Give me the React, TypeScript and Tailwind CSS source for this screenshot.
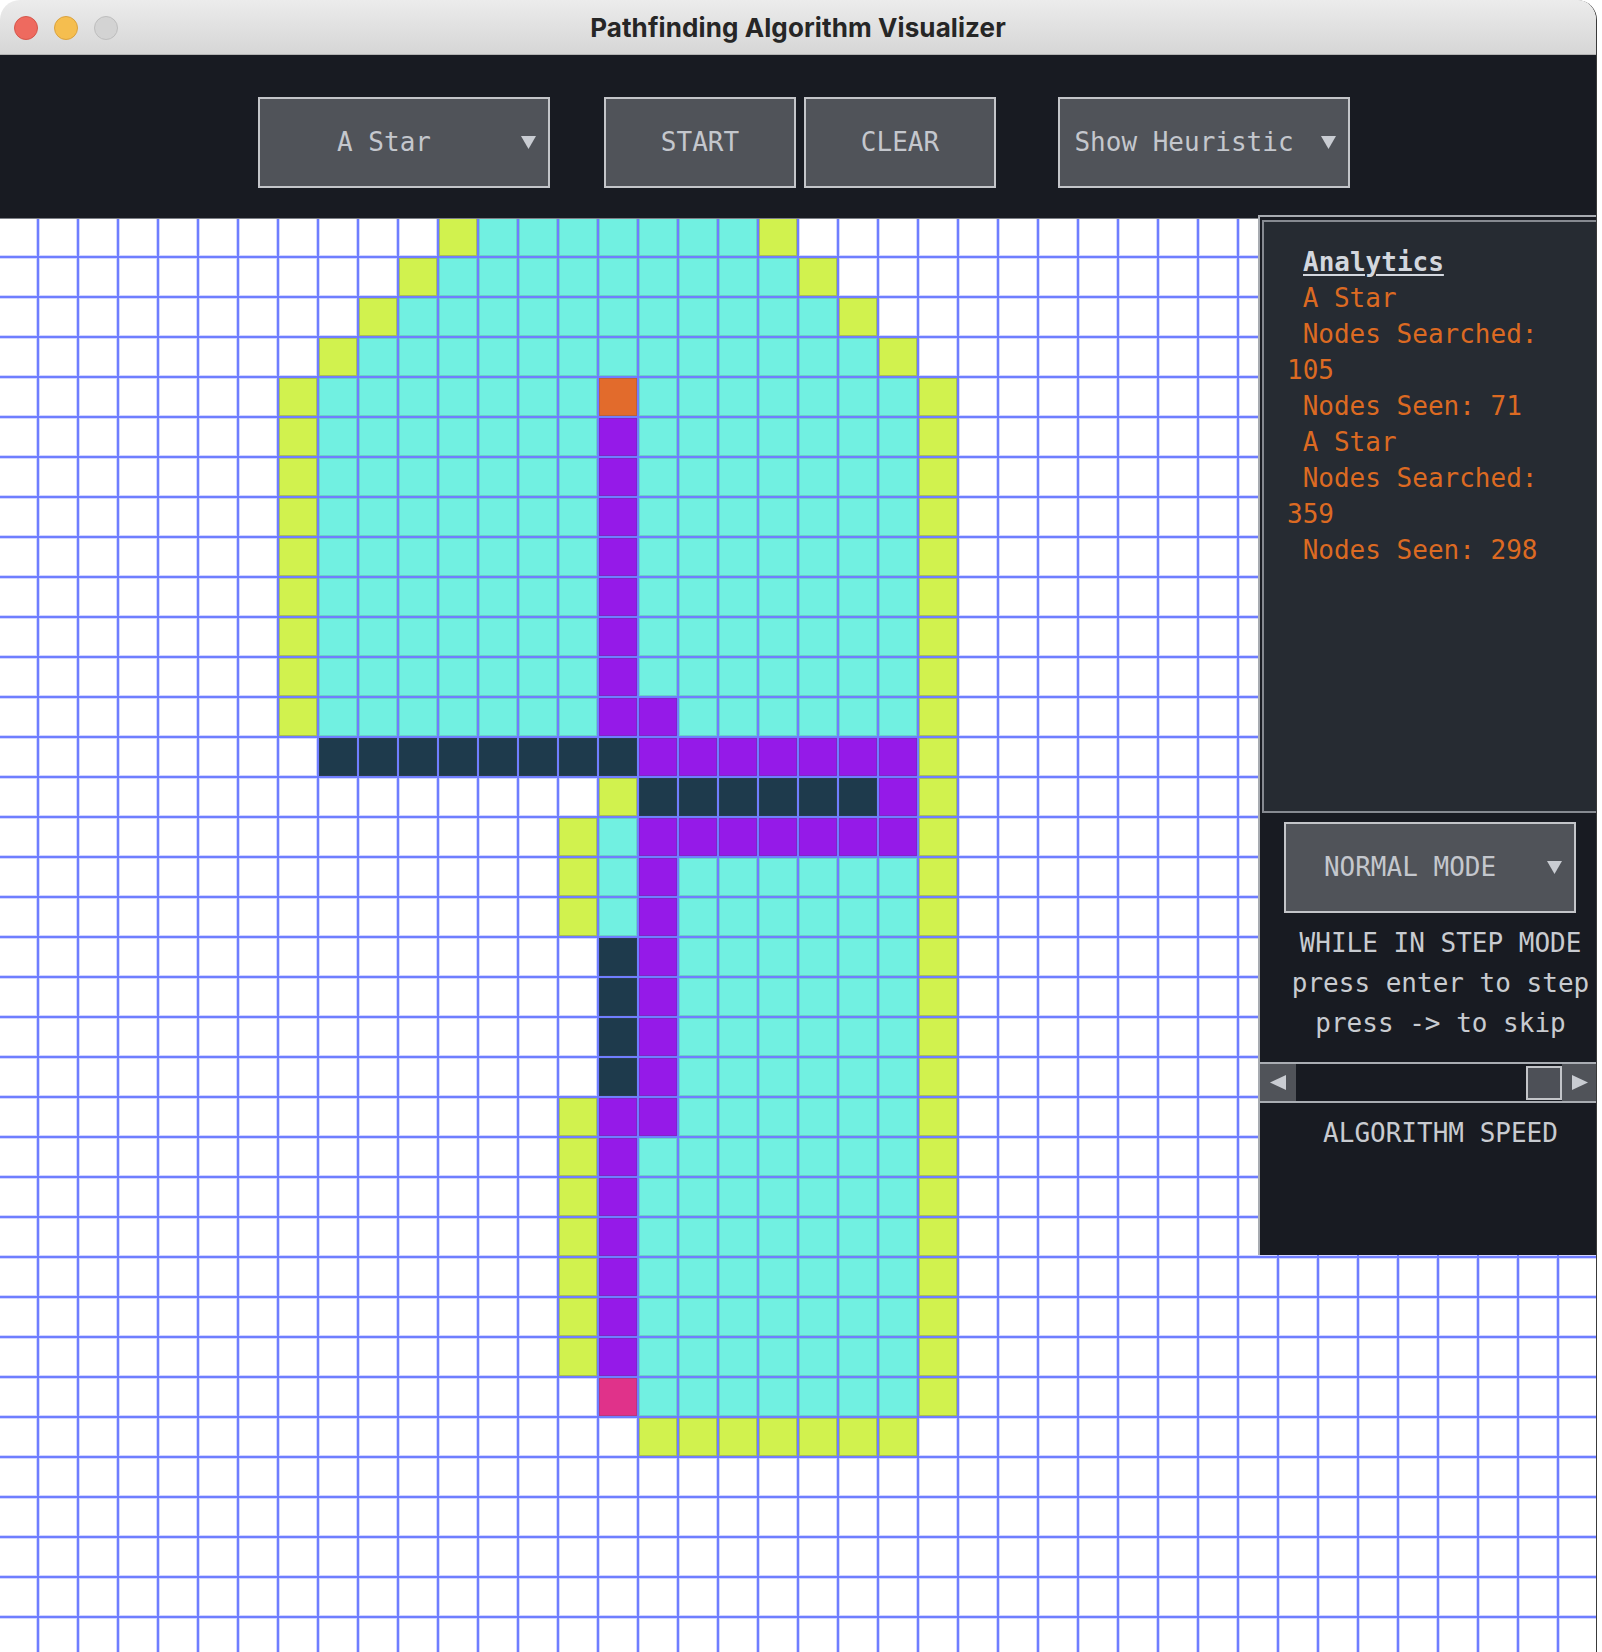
import React from 'react'

type Cell = 'Y' | 'C' | 'P' | 'D' | 'O' | 'K' | null

const cellClass: Record<string, string> = {
    Y: 'bg-[#d1f24e] shadow-[inset_0_0_0_1px_rgba(70,70,90,0.28)]',
    C: 'bg-[#71f0e1] shadow-[inset_0_0_0_1px_rgba(70,70,90,0.18)]',
    P: 'bg-[#951ae8] shadow-[inset_0_0_0_1px_rgba(70,70,90,0.25)]',
    D: 'bg-[#1e3a4c] shadow-[inset_0_0_0_1px_rgba(70,70,90,0.25)]',
    O: 'bg-[#e26b2c] shadow-[inset_0_0_0_1px_rgba(70,70,90,0.25)]',
    K: 'bg-[#e0328a] shadow-[inset_0_0_0_1px_rgba(70,70,90,0.25)]',
    E: 'bg-white shadow-[inset_1px_1px_0_#d2d6ff,inset_-1px_-1px_0_#d2d6ff]',
}

const ROWS = 36
const COLS = 41

// explored area of the search, row by row
const cellAt = (r: number, c: number): Cell => {
    if (r <= 3) {
        if (c === 11 - r || c === 19 + r) return 'Y'
        if (c > 11 - r && c < 19 + r) return 'C'
        return null
    }
    if (r <= 12) {
        if (c === 7 || c === 23) return 'Y'
        if (r === 4 && c === 15) return 'O'
        if (c === 15) return 'P'
        if (r === 12 && c === 16) return 'P'
        if (c > 7 && c < 23) return 'C'
        return null
    }
    if (r === 13) {
        if (c >= 8 && c <= 15) return 'D'
        if (c >= 16 && c <= 22) return 'P'
        if (c === 23) return 'Y'
        return null
    }
    if (r === 14) {
        if (c === 15 || c === 23) return 'Y'
        if (c >= 16 && c <= 21) return 'D'
        if (c === 22) return 'P'
        return null
    }
    if (r <= 17) {
        if (c === 14 || c === 23) return 'Y'
        if (c === 15) return 'C'
        if (r === 15 && c >= 16 && c <= 22) return 'P'
        if (c === 16) return 'P'
        if (c >= 17 && c <= 22) return 'C'
        return null
    }
    if (r <= 21) {
        if (c === 15) return 'D'
        if (c === 16) return 'P'
        if (c >= 17 && c <= 22) return 'C'
        if (c === 23) return 'Y'
        return null
    }
    if (r <= 28) {
        if (c === 14 || c === 23) return 'Y'
        if (c === 15) return 'P'
        if (r === 22 && c === 16) return 'P'
        if (c >= 16 && c <= 22) return 'C'
        return null
    }
    if (r === 29) {
        if (c === 15) return 'K'
        if (c >= 16 && c <= 22) return 'C'
        if (c === 23) return 'Y'
        return null
    }
    if (r === 30 && c >= 16 && c <= 22) return 'Y'
    return null
}

const DownArrow = () => (
    <svg width="15" height="15" viewBox="0 0 15 15">
        <polygon points="0,1 15,1 7.5,14" fill="#c9ccd2" />
    </svg>
)

const Dropdown = ({ label }: { label: string }) => (
    <div className="flex h-[91px] w-[292px] border-2 border-[#c3c5c9] bg-[#505359] text-[#c4c7cd]">
        <div className="flex flex-1 items-center justify-center">{label}</div>
        <div className="flex w-[40px] items-center justify-center">
            <DownArrow />
        </div>
    </div>
)

const Button = ({ label }: { label: string }) => (
    <div className="flex h-[91px] w-[192px] items-center justify-center border-2 border-[#c3c5c9] bg-[#505359] text-[#c4c7cd]">
        {label}
    </div>
)

const TitleBar = () => (
    <div className="relative flex h-[55px] items-center justify-center border-b border-[#b3b3b3] bg-gradient-to-b from-[#ececec] to-[#d6d6d6]">
        <div className="absolute left-[14px] top-[16px] flex gap-[16px]">
            <div className="h-[24px] w-[24px] rounded-full border border-[#d4574c] bg-[#ee6a5f]" />
            <div className="h-[24px] w-[24px] rounded-full border border-[#d9a23f] bg-[#f5be4f]" />
            <div className="h-[24px] w-[24px] rounded-full border border-[#bdbdbd] bg-[#d3d3d3]" />
        </div>
        <span className="font-['Inter'] text-[26px] font-bold tracking-[0.1px] text-[#262626]">
            Pathfinding Algorithm Visualizer
        </span>
    </div>
)

const Toolbar = () => (
    <div className="relative z-10 flex h-[164px] items-start border-b border-[#7d8087] bg-[#181b22] pl-[258px] pt-[42px]">
        <Dropdown label="A Star" />
        <div className="ml-[54px] flex gap-[8px]">
            <Button label="START" />
            <Button label="CLEAR" />
        </div>
        <div className="ml-[62px]">
            <Dropdown label="Show Heuristic" />
        </div>
    </div>
)

const Grid = () => {
    const cells = []
    for (let r = 0; r < ROWS; r++) {
        for (let c = 0; c < COLS; c++) {
            const k = cellAt(r, c) ?? 'E'
            cells.push(
                <div key={r + '-' + c} className={'border-b-2 border-r-2 border-[#6f7eff] ' + cellClass[k]} />
            )
        }
    }
    return (
        <div className="-ml-px -mt-px grid w-max grid-cols-[repeat(41,40px)] auto-rows-[40px]">
            {cells}
        </div>
    )
}

const analytics = [
    ' A Star',
    ' Nodes Searched:',
    '105',
    ' Nodes Seen: 71',
    ' A Star',
    ' Nodes Searched:',
    '359',
    ' Nodes Seen: 298',
]

const SidePanel = () => (
    <div className="absolute left-[1258px] top-[215px] z-20 h-[1040px] w-[339px] overflow-hidden border-l-2 border-t-2 border-[#a7abb1] bg-[#181b22] font-['DejaVu_Sans_Mono',monospace] text-[26px]">
        <div className="ml-[2px] mt-[3px] h-[593px] border-2 border-r-0 border-[#868a91] bg-[#262b32] pl-[23px] pt-[22px] leading-[36px]">
            <div className="pl-[16px]">
                <span className="font-bold text-[#d3d7de] underline decoration-2 underline-offset-[3px]">Analytics</span>
            </div>
            {analytics.map((line, i) => (
                <div key={i} className="whitespace-pre text-[#dc6a22]">
                    {line}
                </div>
            ))}
        </div>
        <div className="ml-[24px] mt-[9px]">
            <Dropdown label="NORMAL MODE" />
        </div>
        <div className="mt-[10px] pl-[24px] text-center leading-[40px] text-[#c8cbd0]">
            <div className="whitespace-pre">WHILE IN STEP MODE</div>
            <div className="whitespace-pre">press enter to step</div>
            <div className="whitespace-pre">press -&gt; to skip</div>
        </div>
        <div className="mt-[19px] flex h-[41px] border-y-2 border-[#a9adb3]">
            <div className="flex w-[36px] items-center justify-center bg-[#505359]">
                <svg width="16" height="15" viewBox="0 0 16 15">
                    <polygon points="16,0 16,15 0,7.5" fill="#c9ccd2" />
                </svg>
            </div>
            <div className="relative flex-1 bg-[#181b22]">
                <div className="absolute left-[230px] top-[2px] h-[34px] w-[36px] border-2 border-[#c3c5c9] bg-[#4d5057]" />
            </div>
            <div className="flex w-[35px] items-center justify-center bg-[#505359]">
                <svg width="16" height="15" viewBox="0 0 16 15">
                    <polygon points="0,0 0,15 16,7.5" fill="#c9ccd2" />
                </svg>
            </div>
        </div>
        <div className="mt-[10px] pl-[24px] text-center leading-[40px] text-[#c8cbd0]">ALGORITHM SPEED</div>
    </div>
)

const App = () => {
    return (
        <div className="relative h-[1652px] w-[1602px] overflow-hidden bg-white">
            <div className="relative h-[1652px] w-[1597px] overflow-hidden rounded-t-[20px] border-r border-[#3a3a3a] bg-white font-['DejaVu_Sans_Mono',monospace] text-[26px]">
                <TitleBar />
                <Toolbar />
                <Grid />
                <SidePanel />
            </div>
        </div>
    )
}

export default App
